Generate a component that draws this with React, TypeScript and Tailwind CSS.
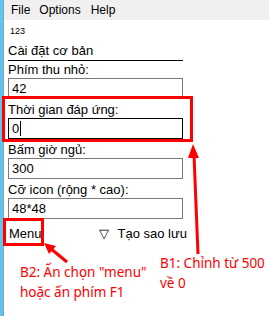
import React from "react";

const ui = { fontFamily: '"Liberation Sans", Arial, sans-serif' };
const ann = { fontFamily: '"Noto Sans", "Open Sans", sans-serif' };

function Field({ label, value, focused }: { label: string; value: string; focused?: boolean }) {
  return (
    <div className="flex flex-col">
      <div className="h-[16px] leading-[16px] text-[13px] text-black whitespace-nowrap">{label}</div>
      <div
        className={
          "h-[21px] w-[175px] flex items-center pl-[3px] text-[13px] text-black bg-white border " +
          (focused ? "border-black" : "border-[#7a7a7a]")
        }
      >
        {value}
        {focused && <span className="inline-block w-[1px] h-[15px] bg-black ml-[1px]" />}
      </div>
    </div>
  );
}

export default function App() {
  return (
    <div className="relative w-[269px] h-[316px] bg-white overflow-hidden flex" style={ui}>
      <div className="w-[4px] h-full bg-[#5fc5ee] border-r border-[#7fa9bb]" />
      <div className="flex-1 flex flex-col">
        <div className="h-[20px] bg-[#f0f0f0] flex items-center text-[12px] text-black">
          <span className="ml-[7px]">File</span>
          <span className="ml-[9px]">Options</span>
          <span className="ml-[10px]">Help</span>
        </div>
        <div className="pl-[4px] flex flex-col">
          <div className="h-[18px] mt-[2px] leading-[18px] text-[9px] text-black pl-[2px]">123</div>
          <div className="mt-[3px] h-[16px] leading-[16px] text-[13px] w-[175px] text-black whitespace-nowrap">
            Cài đặt cơ bản
          </div>
          <div className="w-[175px] h-[1px] bg-black mt-[1px]" />
          <div className="h-[1px]" />
          <div className="flex flex-col gap-[3px]">
            <Field label="Phím thu nhỏ:" value="42" />
            <Field label="Thời gian đáp ứng:" value="0" focused />
            <Field label="Bấm giờ ngủ:" value="300" />
            <Field label="Cỡ icon (rộng * cao):" value="48*48" />
          </div>
          <div className="mt-[6px] h-[18px] flex items-center text-[13px] text-black">
            <span className="ml-[1px]">Menu</span>
            <span className="ml-[57px] text-[13px]">▽</span>
            <span className="ml-[9px]">Tạo sao lưu</span>
          </div>
        </div>
      </div>

      {/* annotations */}
      <div className="absolute left-[2px] top-[96px] w-[191px] h-[46px] border-[3px] border-[#ff0000]" />
      <div className="absolute left-[3px] top-[218px] w-[41px] h-[28px] border-[3px] border-[#ff0000]" />
      <svg className="absolute left-0 top-0" width="269" height="316" viewBox="0 0 269 316">
        <line x1="67" y1="262" x2="50" y2="248" stroke="#ff0000" strokeWidth="3" />
        <polygon points="44,243 56,246 49,254" fill="#ff0000" />
        <line x1="198" y1="254" x2="194" y2="155" stroke="#ff0000" strokeWidth="3" />
        <polygon points="193,144 188,158 199,158" fill="#ff0000" />
      </svg>
      <div className="absolute left-[20px] top-[262px] text-[13.5px] leading-[20px] text-[#ff0000] whitespace-nowrap" style={ann}>
        <div>B2: Ấn chọn "menu"</div>
        <div>hoặc ấn phím F1</div>
      </div>
      <div className="absolute left-[160px] top-[253px] text-[13.5px] leading-[20px] text-[#ff0000] whitespace-nowrap" style={ann}>
        <div>B1: Chỉnh từ 500</div>
        <div>về 0</div>
      </div>
    </div>
  );
}
